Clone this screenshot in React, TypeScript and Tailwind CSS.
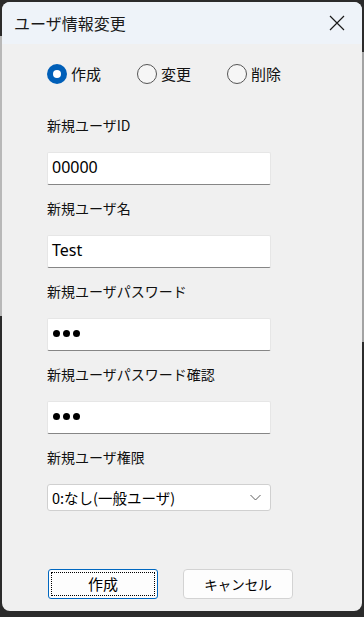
import { useState } from 'react';

type Mode = 'create' | 'edit' | 'delete';

const modes: { key: Mode; label: string }[] = [
  { key: 'create', label: '作成' },
  { key: 'edit', label: '変更' },
  { key: 'delete', label: '削除' },
];

function Radio({ checked, label, onClick }: { checked: boolean; label: string; onClick: () => void }) {
  return (
    <button type="button" onClick={onClick} className="flex w-[90px] items-center gap-[4px]">
      {checked ? (
        <span className="flex h-[20px] w-[20px] items-center justify-center rounded-full bg-[#005fb8]">
          <span className="h-[8px] w-[8px] rounded-full bg-white" />
        </span>
      ) : (
        <span className="h-[20px] w-[20px] rounded-full border border-[#555555] bg-[#f6f6f6]" />
      )}
      <span className="text-[15px] leading-[20px] text-[#111]">{label}</span>
    </button>
  );
}

function Field({ label, first, children }: { label: string; first?: boolean; children: React.ReactNode }) {
  return (
    <div className={first ? 'mt-[31px]' : 'mt-[13px]'}>
      <div className="h-[20px] text-[14px] leading-[20px] text-[#111]">{label}</div>
      <div className="mt-[17px]">{children}</div>
    </div>
  );
}

function TextBox({ value }: { value: string }) {
  return (
    <div className="flex h-[33px] w-[224px] items-center rounded-[2px] border border-[#e6e6e6] border-b-[#868686] bg-white pb-[4px] pl-[4px] font-['Noto_Sans','Noto_Sans_CJK_JP',sans-serif] text-[16px] text-black">
      {value}
    </div>
  );
}

function PasswordBox() {
  return (
    <div className="flex h-[33px] w-[224px] items-center gap-[3px] rounded-[2px] border border-[#e6e6e6] border-b-[#868686] bg-white pb-[3px] pl-[5px]">
      <span className="h-[7px] w-[7px] rounded-full bg-black" />
      <span className="h-[7px] w-[7px] rounded-full bg-black" />
      <span className="h-[7px] w-[7px] rounded-full bg-black" />
    </div>
  );
}

export default function App() {
  const [mode, setMode] = useState<Mode>('create');

  return (
    <div className="relative h-[617px] w-[364px] overflow-hidden bg-[#2b2b2b] px-[2px] pb-[6px] pt-[2px] font-['Noto_Sans_CJK_JP',sans-serif]">
      {/* windows behind the dialog */}
      <div className="absolute left-0 top-[36px] h-[280px] w-[2px] bg-[#b8b8b8]" />
      <div className="absolute right-0 top-[52px] h-[290px] w-[2px] bg-[#a3a3a3]" />

      <div className="relative flex h-full flex-col overflow-hidden rounded-[8px] bg-[#f0f0f0]">
        <div className="flex h-[42px] shrink-0 items-center justify-between bg-[#eef3f9] pl-[12px] pr-[17px]">
          <span className="text-[16px] leading-[20px] text-[#1a1a1a]">ユーザ情報変更</span>
          <svg width="16" height="16" viewBox="0 0 16 16" fill="none" stroke="#1a1a1a" strokeWidth="1.2">
            <path d="M1 1 L15 15 M15 1 L1 15" />
          </svg>
        </div>

        <div className="flex flex-1 flex-col pl-[45px]">
          <div className="mt-[20px] flex h-[20px]">
            {modes.map((m) => (
              <Radio key={m.key} checked={mode === m.key} label={m.label} onClick={() => setMode(m.key)} />
            ))}
          </div>

          <Field label="新規ユーザID" first>
            <TextBox value="00000" />
          </Field>
          <Field label="新規ユーザ名">
            <TextBox value="Test" />
          </Field>
          <Field label="新規ユーザパスワード">
            <PasswordBox />
          </Field>
          <Field label="新規ユーザパスワード確認">
            <PasswordBox />
          </Field>
          <Field label="新規ユーザ権限">
            <div className="flex h-[27px] w-[224px] items-center justify-between rounded-[3px] border border-[#d0d0d0] bg-white pl-[4px] pr-[9px]">
              <span className="text-[14.5px] leading-[20px] text-black">0:なし(一般ユーザ)</span>
              <svg width="11" height="7" viewBox="0 0 11 7" fill="none" stroke="#5f5f5f" strokeWidth="1">
                <path d="M0.5 1 L5.5 6 L10.5 1" />
              </svg>
            </div>
          </Field>

          <div className="mt-auto mb-[12px] ml-[1px] flex gap-[25px]">
            <button
              type="button"
              className="flex h-[30px] w-[110px] items-center justify-center rounded-[3px] border border-[#0067c0] bg-[#fdfdfd] p-[2px]"
            >
              <span className="flex h-full w-full items-center justify-center border border-dotted border-black text-[15px] text-black">
                作成
              </span>
            </button>
            <button
              type="button"
              className="flex h-[30px] w-[110px] items-center justify-center rounded-[4px] border border-[#d3d3d3] bg-[#fdfdfd] text-[13.5px] text-black"
            >
              キャンセル
            </button>
          </div>
        </div>
      </div>
    </div>
  );
}
